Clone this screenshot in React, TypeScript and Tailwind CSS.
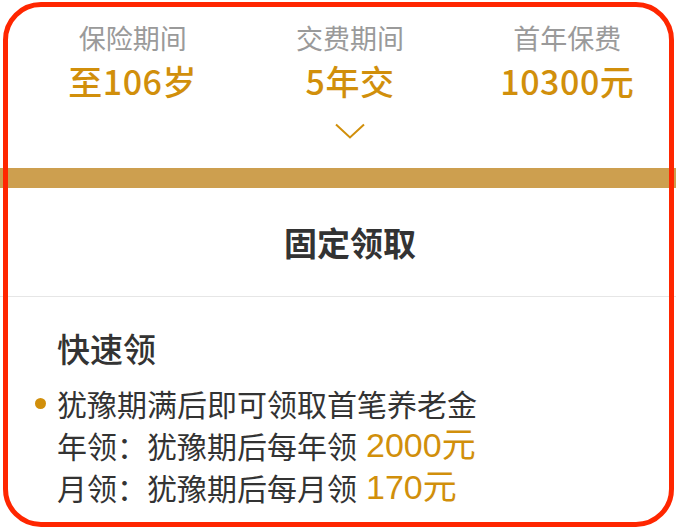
import React from "react";

/* ── Data ── */

const SUMMARY = [
  { label: "保险期间", value: "至106岁" },
  { label: "交费期间", value: "5年交" },
  { label: "首年保费", value: "10300元" },
];

const FONT = { fontFamily: '"Noto Sans CJK SC", "Noto Sans", sans-serif' };
const AMOUNT_FONT = { fontFamily: '"Liberation Sans", "Noto Sans CJK SC", sans-serif' };

/* ── Pieces ── */

function Chevron() {
  return (
    <svg width="30" height="16" viewBox="0 0 30 16" fill="none">
      <path d="M1 1.5 L15 14.5 L29 1.5" stroke="#d18f0b" strokeWidth="2" />
    </svg>
  );
}

function SummaryCol({ label, value }: { label: string; value: string }) {
  return (
    <div className="flex flex-col items-center">
      <div className="text-[27px] leading-[36px] text-[#9a9a9a]">{label}</div>
      <div className="mt-[3px] text-[34px] leading-[44px] font-medium text-[#d18f0b] tracking-[0.5px]">{value}</div>
    </div>
  );
}

function Amount({ children }: { children: React.ReactNode }) {
  return (
    <span className="ml-[9px] text-[34px] leading-none text-[#d18f0b]" style={AMOUNT_FONT}>
      {children}
    </span>
  );
}

/* ── Main ── */

export default function App() {
  return (
    <div className="relative w-[676px] h-[532px] bg-white overflow-hidden" style={FONT}>
      {/* Summary */}
      <div className="h-[168px] pl-[24px] pt-[20px] flex flex-col">
        <div className="grid grid-cols-3">
          {SUMMARY.map((s) => (
            <SummaryCol key={s.label} label={s.label} value={s.value} />
          ))}
        </div>
        <div className="mt-[20px] flex justify-center">
          <Chevron />
        </div>
      </div>

      <div className="h-[20px] bg-[#cd9f4f]" />

      {/* Section title */}
      <div className="h-[108px] pl-[24px] flex items-center justify-center">
        <span className="text-[33px] font-bold text-[#333333] leading-none">固定领取</span>
      </div>
      <div className="h-px bg-[#e6e6e6]" />

      {/* Detail */}
      <div className="pl-[35px] pt-[31px]">
        <div className="pl-[22px] text-[33px] leading-[40px] font-medium text-[#333333]">快速领</div>
        <div className="mt-[14px] text-[30px] text-[#333333]">
          <div className="flex items-center h-[42px]">
            <span className="w-[11px] h-[11px] rounded-full bg-[#d18f0b] mr-[11px] shrink-0" />
            <span className="leading-none">犹豫期满后即可领取首笔养老金</span>
          </div>
          <div className="pl-[22px] flex items-center h-[42px] leading-none">
            <span>年领：犹豫期后每年领</span>
            <Amount>2000元</Amount>
          </div>
          <div className="pl-[22px] flex items-center h-[42px] leading-none">
            <span>月领：犹豫期后每月领</span>
            <Amount>170元</Amount>
          </div>
        </div>
      </div>

      {/* Highlight frame drawn over the content */}
      <div className="pointer-events-none absolute left-[3px] top-[2px] w-[671px] h-[525px] rounded-[38px] border-[5px] border-[#ff2600]" />
    </div>
  );
}
